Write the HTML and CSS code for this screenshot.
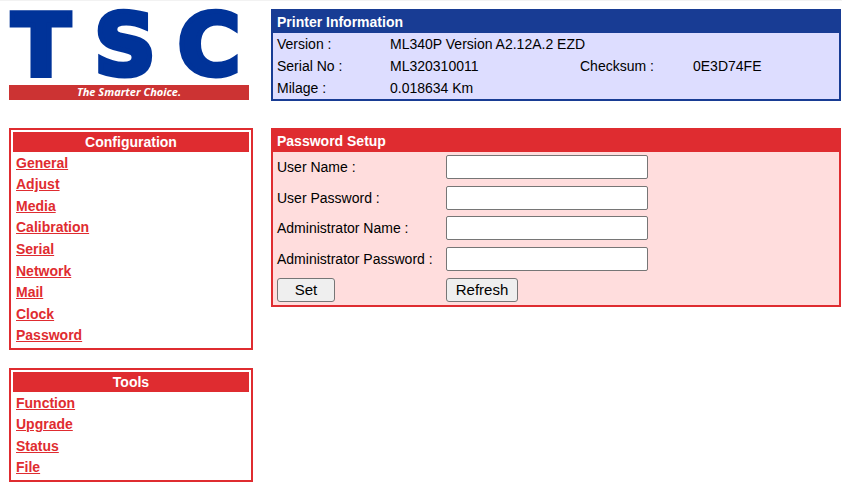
FILE: index.html
```html
<!DOCTYPE html>
<html lang="en">
<head>
<meta charset="utf-8">
<title>Password Setup</title>
<link rel="stylesheet" href="styles.css">
</head>
<body>
<div class="page">
  <aside class="sidebar">
    <svg class="logo" viewBox="0 0 240 90" role="img" aria-label="TSC The Smarter Choice.">
      <text class="logo-name" x="32 116 200" y="65">TSC</text>
      <rect class="logo-band" y="75" width="240" height="15"/>
      <text class="logo-tagline" x="120" y="86">The Smarter Choice.</text>
    </svg>
    <nav class="menu">
      <h2 class="menu-title">Configuration</h2>
      <ul class="menu-list menu-list-config">
        <li><a href="#general">General</a></li>
        <li><a href="#adjust">Adjust</a></li>
        <li><a href="#media">Media</a></li>
        <li><a href="#calibration">Calibration</a></li>
        <li><a href="#serial">Serial</a></li>
        <li><a href="#network">Network</a></li>
        <li><a href="#mail">Mail</a></li>
        <li><a href="#clock">Clock</a></li>
        <li><a href="#password">Password</a></li>
      </ul>
    </nav>
    <nav class="menu">
      <h2 class="menu-title">Tools</h2>
      <ul class="menu-list menu-list-tools">
        <li><a href="#function">Function</a></li>
        <li><a href="#upgrade">Upgrade</a></li>
        <li><a href="#status">Status</a></li>
        <li><a href="#file">File</a></li>
      </ul>
    </nav>
  </aside>
  <main class="content">
    <section class="panel panel-info">
      <h2 class="panel-title">Printer Information</h2>
      <table class="info">
        <colgroup><col class="col-label"><col class="col-value"><col class="col-label"><col></colgroup>
        <tbody>
          <tr><th scope="row">Version :</th><td colspan="3">ML340P Version A2.12A.2 EZD</td></tr>
          <tr><th scope="row">Serial No :</th><td>ML320310011</td><th scope="row">Checksum :</th><td>0E3D74FE</td></tr>
          <tr><th scope="row">Milage :</th><td colspan="3">0.018634 Km</td></tr>
        </tbody>
      </table>
    </section>
    <section class="panel panel-setup">
      <h2 class="panel-title">Password Setup</h2>
      <form class="form">
        <label for="user-name">User Name :</label><input id="user-name" type="text">
        <label for="user-password">User Password :</label><input id="user-password" type="password">
        <label for="admin-name">Administrator Name :</label><input id="admin-name" type="text">
        <label for="admin-password">Administrator Password :</label><input id="admin-password" type="password">
        <button class="btn-set" type="submit">Set</button><button class="btn-refresh" type="button">Refresh</button>
      </form>
    </section>
  </main>
</div>
</body>
</html>
```
FILE: styles.css
```css
* {
  box-sizing: border-box;
}

body {
  margin: 0;
  border-top: 1px solid #f2f2f2;
  background: #fff;
  color: #000;
  font: 14px/20px "Liberation Sans", Arial, sans-serif;
}

h2 {
  margin: 0;
  font-size: 14px;
  color: #fff;
}

.page {
  display: grid;
  grid-template-columns: 244px 1fr;
  gap: 18px;
  align-items: start;
  padding: 8px 1px 14px 9px;
}

.sidebar {
  display: flex;
  flex-direction: column;
  gap: 18px;
}

.logo {
  display: block;
  width: 240px;
  height: 90px;
  margin: 1px 0 10px;
  overflow: visible;
}

.logo-name {
  font: bold 86px "DejaVu Sans", sans-serif;
  text-anchor: middle;
  fill: #039;
  stroke: #039;
  stroke-width: 5px;
}

.logo-band {
  fill: #c33;
}

.logo-tagline {
  font: italic bold 11px "Open Sans", sans-serif;
  text-anchor: middle;
  fill: #fff;
}

.menu {
  padding: 2px;
  border: 2px solid #df2c30;
}

.menu-title {
  background: #df2c30;
  text-align: center;
}

.menu-list {
  display: grid;
  grid-auto-rows: 1fr;
  align-items: center;
  margin: 0;
  padding: 0 3px;
  list-style: none;
}

.menu-list-config {
  min-height: 194px;
}

.menu-list-tools {
  min-height: 86px;
}

.menu-list a {
  color: #df2c30;
  font-weight: bold;
}

.content {
  display: flex;
  flex-direction: column;
  gap: 27px;
}

.panel {
  border: 2px solid;
}

.panel-info {
  border-color: #183c94;
  background: #ddf;
}

.panel-setup {
  border-color: #df2c30;
  background: #fdd;
}

.panel-title {
  padding: 1px 4px;
}

.panel-info .panel-title {
  background: #183c94;
}

.panel-setup .panel-title {
  background: #df2c30;
}

.info {
  width: 100%;
  table-layout: fixed;
  border-collapse: collapse;
}

.col-label {
  width: 113px;
}

.col-value {
  width: 190px;
}

.info th,
.info td {
  height: 22px;
  padding: 0 4px;
  font-weight: normal;
  text-align: left;
}

.form {
  display: grid;
  grid-template-columns: 169px 1fr;
  grid-auto-rows: 1fr;
  align-items: center;
  min-height: 153px;
  padding: 0 4px;
}

.form input {
  width: 202px;
  height: 24px;
  padding: 1px 4px;
  border: 1px solid #767676;
  border-radius: 2px;
  background: #fff;
  font: inherit;
}

.form button {
  height: 24px;
  padding: 0;
  border: 1px solid #767676;
  border-radius: 3px;
  background: #efefef;
  color: #000;
  font: 15px "Liberation Sans", Arial, sans-serif;
}

.form .btn-set {
  width: 58px;
}

.form .btn-refresh {
  width: 72px;
}
```
